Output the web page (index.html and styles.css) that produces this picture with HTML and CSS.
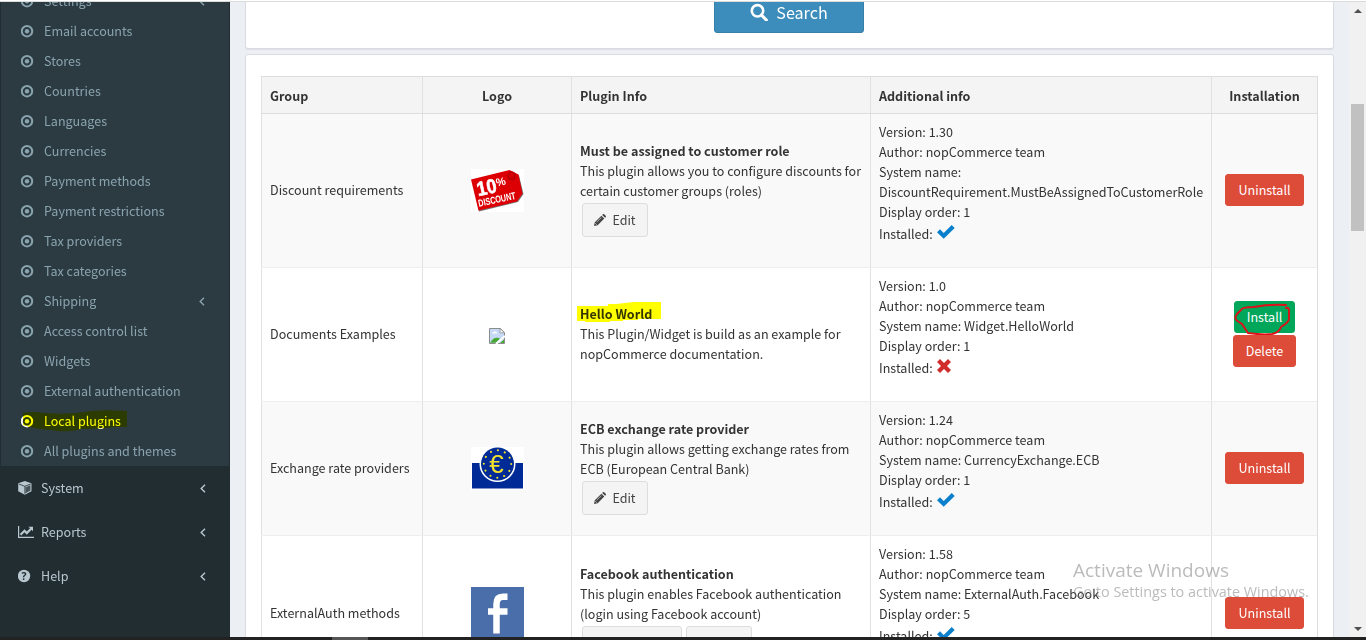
FILE: index.html
```html
<!DOCTYPE html>
<html lang="en">
<head>
<meta charset="utf-8">
<title>Local plugins</title>
<link rel="stylesheet" href="styles.css">
</head>
<body>
<svg width="0" height="0" class="defs">
  <symbol id="dot" viewBox="0 0 13 13"><circle cx="6" cy="6.200" r="5.200" fill="none" stroke="currentColor" stroke-width="2"/><circle cx="6" cy="6.200" r="2.200" fill="currentColor"/></symbol>
  <symbol id="chev" viewBox="0 0 6 9"><path d="M5 .8L1.2 4.500 5 8.200" fill="none" stroke="currentColor" stroke-width="1.400"/></symbol>
  <symbol id="pencil" viewBox="0 0 12 12"><path d="M0 12l.8-3.700L7.400 1.700l2.900 2.900L3.700 11.200zM8.200.9l.6-.6q.7-.6 1.400 0l1.500 1.500q.6.700 0 1.400l-.6.6z" fill="currentColor"/><path d="M1.200 9.200l1.600 1.600M2.600 8.200l4.800-4.700" stroke="#f4f4f4" stroke-width=".6"/></symbol>
  <symbol id="check" viewBox="0 0 18 14"><path d="M0 7.200L3 4.300 6.700 8 14.700 0 17.700 2.900 6.700 13.700z" fill="#0a80cc"/></symbol>
  <symbol id="cross" viewBox="0 0 14 14"><path d="M3 0l4 4 4-4 3 3-4 4 4 4-3 3-4-4-4 4-3-3 4-4-4-4z" fill="#d02c2c"/></symbol>
</svg>
<div class="topline"></div>
<div class="page">
  <nav class="sidebar">
    <ul class="submenu">
      <li><svg class="dot"><use href="#dot"/></svg><span>Settings</span><svg class="chev"><use href="#chev"/></svg></li>
      <li><svg class="dot"><use href="#dot"/></svg><span>Email accounts</span></li>
      <li><svg class="dot"><use href="#dot"/></svg><span>Stores</span></li>
      <li><svg class="dot"><use href="#dot"/></svg><span>Countries</span></li>
      <li><svg class="dot"><use href="#dot"/></svg><span>Languages</span></li>
      <li><svg class="dot"><use href="#dot"/></svg><span>Currencies</span></li>
      <li><svg class="dot"><use href="#dot"/></svg><span>Payment methods</span></li>
      <li><svg class="dot"><use href="#dot"/></svg><span>Payment restrictions</span></li>
      <li><svg class="dot"><use href="#dot"/></svg><span>Tax providers</span></li>
      <li><svg class="dot"><use href="#dot"/></svg><span>Tax categories</span></li>
      <li><svg class="dot"><use href="#dot"/></svg><span>Shipping</span><svg class="chev"><use href="#chev"/></svg></li>
      <li><svg class="dot"><use href="#dot"/></svg><span>Access control list</span></li>
      <li><svg class="dot"><use href="#dot"/></svg><span>Widgets</span></li>
      <li><svg class="dot"><use href="#dot"/></svg><span>External authentication</span></li>
      <li class="active"><svg class="dot"><use href="#dot"/></svg><span>Local plugins</span>
        <svg class="marker-menu" width="106" height="24" viewBox="0 0 106 24"><path d="M0 4Q12 2 20 4 42 6 62 3 75 0 104 2V18H92Q72 20 58 20 45 24 27 21 12 20 0 16z" fill="#ff0"/></svg></li>
      <li><svg class="dot"><use href="#dot"/></svg><span>All plugins and themes</span></li>
    </ul>
    <ul class="menu">
      <li><svg class="mi" viewBox="0 0 16 14"><path d="M6.800 0l6.700 2.300v8L6.800 13.800.2 10.300v-8z" fill="currentColor"/><path d="M7.500 6.200v6l4.900-2.600V4.300z" fill="#222d32" opacity=".75"/><path d="M.8 3l6 2.300L12.800 3M6.900 5.300v7.500" fill="none" stroke="#222d32" stroke-width=".8"/></svg><span>System</span><svg class="chev"><use href="#chev"/></svg></li>
      <li><svg class="mi" viewBox="0 0 16 14"><path d="M.6 1v11.400H16" fill="none" stroke="currentColor" stroke-width="1.200"/><path d="M2.500 9.800l4-4 2.300 2.300 4.500-4.600" fill="none" stroke="currentColor" stroke-width="2.200"/><path d="M10.500 1.800H15v4.500z" fill="currentColor"/></svg><span>Reports</span><svg class="chev"><use href="#chev"/></svg></li>
      <li><svg class="mi" viewBox="0 0 16 14"><circle cx="6" cy="7" r="6.200" fill="currentColor"/><text x="6" y="10.800" text-anchor="middle" class="q">?</text></svg><span>Help</span><svg class="chev"><use href="#chev"/></svg></li>
    </ul>
  </nav>
  <main class="content">
    <section class="box search-box">
      <button class="search"><svg width="18" height="18" viewBox="0 0 18 18"><circle cx="7.500" cy="7.800" r="5.700" fill="none" stroke="#fff" stroke-width="2.600"/><path d="M11.500 12l4.800 5" stroke="#fff" stroke-width="3.200" stroke-linecap="round"/></svg><span>Search</span></button>
    </section>
    <section class="box grid-box">
      <div class="grid">
        <div class="row head"><div>Group</div><div class="c">Logo</div><div>Plugin Info</div><div>Additional info</div><div class="c">Installation</div></div>
        <div class="row odd r1">
          <div>Discount requirements</div>
          <div class="c"><svg width="53" height="43" viewBox="0 0 53 43"><path fill="#fff" d="M0 0h53v43H0z"/><path d="M1.500 11.500L39 2l9 4.500L52.500 25 47 33 8 42.500z" fill="#777"/><path d="M0 10.500L38.500 1l9 4.500 4 19-5.500 8L7.500 41.500z" fill="#dc0005"/><circle cx="40.500" cy="7" r="4.500" fill="#bd0004"/><circle cx="40.500" cy="6.500" r="2.500" fill="#d40005"/><g transform="rotate(-12 8 28)" fill="#fff"><text x="7.500" y="27" class="ten" textLength="20" lengthAdjust="spacingAndGlyphs">10</text><text x="27.500" y="21.500" class="pct">%</text><text x="6" y="37.500" class="disc" textLength="38" lengthAdjust="spacingAndGlyphs">DISCOUNT</text></g></svg></div>
          <div class="info"><b>Must be assigned to customer role</b><span>This plugin allows you to configure discounts for<br>certain customer groups (roles)</span><button class="edit"><svg width="12" height="12"><use href="#pencil"/></svg>Edit</button></div>
          <div class="extra"><span>Version: 1.30</span><span>Author: nopCommerce team</span><span>System name:</span><span>DiscountRequirement.MustBeAssignedToCustomerRole</span><span>Display order: 1</span><span class="inst">Installed: <svg width="18" height="14"><use href="#check"/></svg></span></div>
          <div class="acts"><button class="btn red">Uninstall</button></div>
        </div>
        <div class="row r2">
          <div>Documents Examples</div>
          <div class="c"><svg class="broken" width="16" height="16" viewBox="0 0 16 16"><path d="M.5.500h10.800l4.200 4.200v10.800H.5z" fill="#c6d9f7" stroke="#8c8c8c"/><path d="M3 5.500Q3.200 4 4.800 4 5.500 2.500 7 4q1.500 0 1.500 1.500z" fill="#fff"/><path d="M1 14.800q3.500-6 8-5l2 1-4.500 4z" fill="#49a834"/><path d="M11 .5v4.300h4.500z" fill="#fff" stroke="#8c8c8c" stroke-width=".8"/><path d="M7 16l9-8" stroke="#fff" stroke-width="2"/><path d="M11 15h4v-3.500z" fill="#49a834"/></svg></div>
          <div class="info"><b class="marked">Hello World<svg class="marker-title" width="84" height="21" viewBox="0 0 84 21"><path d="M0 4H31V2H39L57 0H84V17H61V18H46V19H33V20H8V19H0z" fill="#ff0"/></svg></b><span>This Plugin/Widget is build as an example for<br>nopCommerce documentation.</span></div>
          <div class="extra"><span>Version: 1.0</span><span>Author: nopCommerce team</span><span>System name: Widget.HelloWorld</span><span>Display order: 1</span><span class="inst">Installed: <svg width="14" height="14"><use href="#cross"/></svg></span></div>
          <div class="acts"><button class="btn green">Install<svg class="loop" width="62" height="34" viewBox="0 0 62 34"><path d="M52 3Q35 2 20 5 8 5 7 8L3 12Q-1 17 5 20L8 22Q12 28 14 31 28 33 38 32 45 31 47 25 55 20 55 17V9Q55 5 52 6" fill="none" stroke="#e10f18" stroke-width="1.900" stroke-linecap="round"/></svg></button><button class="btn red">Delete</button></div>
        </div>
        <div class="row odd r3">
          <div>Exchange rate providers</div>
          <div class="c"><svg width="53" height="43" viewBox="0 0 53 43"><path fill="#fff" d="M0 0h53v43H0z"/><path d="M1 16h51v25.500H1z" fill="#002b96"/><circle cx="26.500" cy="17" r="18" fill="#fff"/><circle cx="26.500" cy="17" r="16.500" fill="#002b96"/><circle cx="26.500" cy="17" r="13.700" fill="none" stroke="#f2e22c" stroke-width="2" stroke-linecap="round" stroke-dasharray=".1 7.073"/><text x="25.500" y="26" text-anchor="middle" class="euro">€</text></svg></div>
          <div class="info"><b>ECB exchange rate provider</b><span>This plugin allows getting exchange rates from<br>ECB (European Central Bank)</span><button class="edit"><svg width="12" height="12"><use href="#pencil"/></svg>Edit</button></div>
          <div class="extra"><span>Version: 1.24</span><span>Author: nopCommerce team</span><span>System name: CurrencyExchange.ECB</span><span>Display order: 1</span><span class="inst">Installed: <svg width="18" height="14"><use href="#check"/></svg></span></div>
          <div class="acts"><button class="btn red">Uninstall</button></div>
        </div>
        <div class="row r4">
          <div>ExternalAuth methods</div>
          <div class="c"><svg width="53" height="53" viewBox="0 0 53 53"><path d="M0 0h53v53H0z" fill="#4a6ea9"/><path d="M36.500 9.800H32Q25.500 9.800 25.500 17V46.500M17 24.500H36.500" fill="none" stroke="#fff" stroke-width="6.500"/></svg></div>
          <div class="info"><b>Facebook authentication</b><span>This plugin enables Facebook authentication<br>(login using Facebook account)</span><div class="pair"><button class="edit wide"></button><button class="edit"></button></div></div>
          <div class="extra"><span>Version: 1.58</span><span>Author: nopCommerce team</span><span>System name: ExternalAuth.Facebook</span><span>Display order: 5</span><span class="inst">Installed: <svg width="18" height="14"><use href="#check"/></svg></span></div>
          <div class="acts"><button class="btn red">Uninstall</button></div>
        </div>
      </div>
    </section>
  </main>
  <aside class="scroll"><i class="up"></i><i class="thumb"></i><i class="down"></i></aside>
  <div class="watermark"><div class="w1">Activate Windows</div><div class="w2">Go to Settings to activate Windows.</div></div>
</div>
<div class="taskbar"><i></i></div>
</body>
</html>
```
FILE: styles.css
```css
* { box-sizing: border-box; }
body { margin: 0; width: 1366px; height: 640px; overflow: hidden; display: flex; flex-direction: column; font: 12.550px/20px "Noto Sans CJK SC", "Open Sans", sans-serif; color: #333; }
ul { list-style: none; margin: 0; padding: 0; }
button { font: inherit; display: flex; align-items: center; justify-content: center; padding: 0; border-radius: 3px; border: 1px solid; white-space: nowrap; }
svg { display: block; flex: none; }
.defs { position: absolute; }
.topline { height: 2px; flex: none; background: #fff; border-bottom: 1px solid #d9dcdb; }
.page { height: 635px; flex: none; display: flex; position: relative; overflow: hidden; background: #ecf0f5; }
.taskbar { height: 3px; flex: none; background: #222; padding-left: 332px; }
.taskbar i { display: block; width: 36px; height: 3px; background: #555; }

.sidebar { width: 230px; flex: none; background: #222d32; overflow: hidden; }
.submenu { margin: -16px 1px 0; background: #2c3b41; color: #8aa4af; }
.submenu li { height: 30px; display: flex; align-items: center; padding: 0 24px 0 20px; position: relative; }
.submenu span { margin-left: 10px; }
.dot { width: 13px; height: 13px; }
.chev { width: 6px; height: 9px; margin-left: auto; }
.submenu .active { color: #fff; }
.marker-menu { position: absolute; left: 22px; top: 3px; mix-blend-mode: multiply; }
.menu { color: #b8c7ce; }
.menu li { height: 44px; display: flex; align-items: center; padding: 0 24px 0 18px; }
.menu span { margin-left: 7px; }
.mi { width: 16px; height: 14px; }
.q { font: bold 10.5px "Open Sans", sans-serif; fill: #222d32; }

.content { width: 1119px; flex: none; padding: 0 15px; overflow: hidden; }
.box { width: 1089px; background: #fff; border: 1px solid #d8dce0; border-radius: 3px; box-shadow: 0 1px 1px rgba(0,0,0,.07); }
.search-box { height: 55px; margin-top: -8px; display: flex; justify-content: center; }
.search { width: 150px; height: 42px; margin-top: -4px; margin-left: -1px; background: #3c8dbc; border-color: #367fa9; color: #fff; font-size: 16.100px; gap: 8px; }
.grid-box { margin-top: 5px; height: 700px; padding: 21px 15px; }
.grid { width: 1057px; border-right: 1px solid #ddd; }
.row { display: grid; grid-template-columns: 161px 149px 299px 341px 106px; border-top: 1px solid #eee; }
.row > div { border-left: 1px solid #e1e1e1; padding: 0 8px 2px; display: flex; align-items: center; white-space: nowrap; }
.row > .c { justify-content: center; padding-bottom: 0; }
.row.head > div { padding-bottom: 0; padding-top: 1px; }
.head { height: 37px; background: #f4f4f4; font-weight: bold; border-color: #ddd; }
.odd { background: #f9f9f9; }
.r1 { height: 154px; border-color: #ddd; }
.r2, .r3 { height: 134px; }
.r4 { height: 156px; }
.row > .info, .row > .extra, .row > .acts { flex-direction: column; justify-content: center; align-items: flex-start; }
.row > .extra { justify-content: flex-start; padding-top: 8px; }
.inst { display: flex; align-items: center; height: 24px; gap: 1px; white-space: pre; }
.inst svg { margin-top: -4px; }
.broken { margin-top: 2px; }
.edit { width: 66px; height: 34px; margin: 2px; background: #f4f4f4; border-color: #ddd; color: #444; gap: 6px; }
.pair { display: flex; }
.wide { width: 100px; }
.row > .acts { align-items: center; gap: 2px; }
.btn { height: 32px; color: #fff; position: relative; }
.red { width: 79px; background: #dd4b39; border-color: #dd4b39; }
.green { width: 61px; background: #00a65a; border-color: #00a65a; }
.green + .red { width: 63px; }
.loop { position: absolute; left: -1px; top: 0; }
.marked { position: relative; }
.marker-title { position: absolute; left: -3px; top: -2px; mix-blend-mode: multiply; }
.ten { font: bold 20px "Liberation Sans", sans-serif; stroke: #fff; stroke-width: .6px; }
.pct { font: bold 11px "Liberation Sans", sans-serif; }
.disc { font: bold 10px "Liberation Sans", sans-serif; }
.euro { font: 26px "Liberation Sans", sans-serif; fill: #f2e22c; }

.scroll { width: 17px; background: #f1f1f1; display: flex; flex-direction: column; align-items: center; padding: 7px 0 6px; }
.up { border: 4px solid transparent; border-top: 0; border-bottom: 4px solid #505050; }
.thumb { width: 13px; height: 127px; margin-top: 91px; background: #c1c1c1; }
.down { margin-top: auto; border: 4px solid transparent; border-bottom: 0; border-top: 4px solid #505050; }
.watermark { position: absolute; left: 1073px; top: 556px; color: rgba(120,120,120,.5); font-family: "Open Sans", sans-serif; white-space: nowrap; }
.w1 { font-size: 19px; line-height: 24px; }
.w2 { font-size: 14.400px; line-height: 20px; }
```
